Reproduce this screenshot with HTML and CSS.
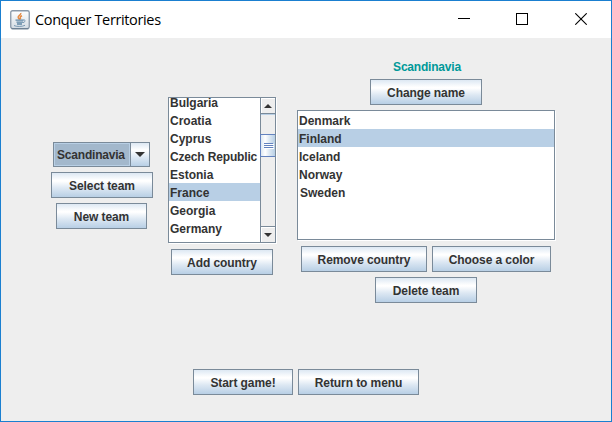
FILE: index.html
```html
<!DOCTYPE html>
<html lang="en">
<head>
<meta charset="utf-8">
<title>Conquer Territories</title>
<link rel="stylesheet" href="styles.css">
</head>
<body>
<div class="window">
  <header class="titlebar">
    <svg class="app-icon" width="20" height="20" viewBox="0 0 20 20">
      <defs><linearGradient id="tile" x1="0" y1="0" x2="0" y2="1"><stop offset="0" stop-color="#fff"/><stop offset="1" stop-color="#d3dbe3"/></linearGradient></defs>
      <rect x=".75" y=".75" width="18.5" height="17.8" rx="1.8" fill="url(#tile)" stroke="#8998a8" stroke-width="1.3"/>
      <path d="M1.5 18.8h17" stroke="#62778b"/>
      <path d="M10.8 3c.5 2-3.2 2.800-2.600 4.600.2.800 1 1.200 1.500 2M12 5.800c-1.800.8-2.500 1.800-1.200 3.400" fill="none" stroke="#e58a43" stroke-width="1.500"/>
      <path d="M5.500 10.200h8M6.500 12.200h6.500M7 14h5" stroke="#5f86a5" stroke-width="1.300"/>
      <path d="M13.200 10c2.600-.8 2.400 2.200-.2 2.600M4 15.500c2 1.300 8.500 1.300 11-.2" fill="none" stroke="#7898b2"/>
    </svg>
    <h1 class="title">Conquer Territories</h1>
    <div class="controls">
      <svg width="12" height="12" viewBox="0 0 12 12"><path d="M0 5.500h12" stroke="#000"/></svg>
      <svg width="12" height="12" viewBox="0 0 12 12"><rect x=".5" y=".5" width="11" height="11" fill="none" stroke="#000"/></svg>
      <svg class="close" width="12" height="12" viewBox="0 0 12 12"><path d="M.3.3l11.400 11.400M11.700.3L.3 11.700" stroke="#000" stroke-width="1.100"/></svg>
    </div>
  </header>
  <main class="content">
    <section class="teams">
      <div class="combo">
        <span class="combo-value">Scandinavia</span>
        <span class="combo-arrow"><svg width="10" height="5" viewBox="0 0 10 5"><path d="M0 0h10L5 5z" fill="#333"/></svg></span>
      </div>
      <button class="btn select">Select team</button>
      <button class="btn new">New team</button>
    </section>
    <section class="countries">
      <div class="list scroll-list">
        <ul class="items scrolled">
          <li>Bulgaria</li><li>Croatia</li><li>Cyprus</li><li class="long">Czech Republic</li><li>Estonia</li><li class="selected">France</li><li>Georgia</li><li>Germany</li>
        </ul>
        <div class="scrollbar">
          <span class="step up"><svg width="8" height="4" viewBox="0 0 8 4"><path d="M4 0l4 4H0z" fill="#333"/></svg></span>
          <span class="track"><span class="thumb"><i></i><i></i><i></i></span></span>
          <span class="step down"><svg width="8" height="4" viewBox="0 0 8 4"><path d="M0 0h8L4 4z" fill="#333"/></svg></span>
        </div>
      </div>
      <button class="btn add">Add country</button>
    </section>
    <section class="team">
      <h2 class="team-name">Scandinavia</h2>
      <button class="btn change">Change name</button>
      <div class="list team-list">
        <ul class="items">
          <li>Denmark</li><li class="selected">Finland</li><li>Iceland</li><li>Norway</li><li class="inset">Sweden</li>
        </ul>
      </div>
      <div class="row">
        <button class="btn remove">Remove country</button>
        <button class="btn color">Choose a color</button>
      </div>
      <button class="btn delete">Delete team</button>
    </section>
  </main>
  <footer class="actions">
    <button class="btn start">Start game!</button>
    <button class="btn return">Return to menu</button>
  </footer>
</div>
</body>
</html>
```
FILE: styles.css
```css
* { box-sizing: border-box; }
body { margin: 0; }
.window {
  width: 612px;
  height: 422px;
  border: 1px solid #1a7fd0;
  background: #eee;
  color: #333;
  font: bold 12px/18px "Liberation Sans", Arial, sans-serif;
  overflow: hidden;
}
.titlebar {
  display: flex;
  align-items: center;
  height: 37px;
  padding: 0 24px 0 9px;
  background: #fff;
}
.app-icon { flex: none; margin-right: 5px; }
.title {
  margin: 0;
  color: #000;
  font: 14.5px/20px "Open Sans", "Noto Sans", sans-serif;
  letter-spacing: -0.36px;
  white-space: nowrap;
}
.controls { display: flex; gap: 46px; margin-left: auto; padding-bottom: 1px; }
.controls svg { display: block; }
.controls .close { margin-left: 1px; }

.content { display: flex; align-items: flex-start; height: 331px; padding-left: 50px; }
.teams, .countries, .team { display: flex; flex-direction: column; align-items: center; flex: none; }

.btn {
  display: block;
  height: 26px;
  padding: 2px 0 0;
  border: 1px solid #7a8a99;
  border-radius: 0;
  background: linear-gradient(#dde8f3 0%, #fff 30%, #fff 34%, #dde8f3 62%, #b8cfe5 100%);
  color: #333;
  font: inherit;
  letter-spacing: -0.08px;
  line-height: 22px;
  text-align: center;
  white-space: nowrap;
}

.teams { width: 102px; gap: 5px; padding-top: 104px; }
.combo {
  display: flex;
  width: 97px;
  height: 25px;
  margin-right: 1px;
  border: 1px solid #7a8a99;
  background: linear-gradient(#dde8f3 0%, #fff 30%, #dde8f3 62%, #b8cfe5 100%);
}
.combo-value {
  width: 76px;
  height: 23px;
  padding-left: 2px;
  border: 1px solid #b8cfe5;
  background: #a3b8cc;
  letter-spacing: -0.2px;
  line-height: 22px;
  white-space: nowrap;
}
.combo-arrow {
  display: flex;
  flex: 1;
  align-items: center;
  justify-content: center;
  border-left: 1px solid #7a8a99;
}
.select { width: 102px; }
.new { width: 91px; margin-right: 1px; }

.countries { width: 108px; gap: 6px; margin-left: 15px; padding-top: 59px; }
.list {
  border: 1px solid #7a8a99;
  background: #fff;
  box-shadow: 1px 1px #fff;
  overflow: hidden;
}
.items { margin: 0; padding: 0; list-style: none; }
.items li { height: 18px; padding-left: 1px; line-height: 20px; white-space: nowrap; }
.items .long { letter-spacing: -0.16px; }
.items .inset { padding-left: 2px; }
.items .selected { background: #b8cfe5; }
.scroll-list { display: flex; width: 108px; height: 146px; }
.scroll-list .items { width: 91px; }
.scrolled { margin-top: -5px; }
.scrollbar {
  display: flex;
  flex-direction: column;
  width: 15px;
  border-left: 1px solid #7a8a99;
  background: #eee;
}
.step { display: flex; align-items: center; justify-content: center; height: 16px; flex: none; box-shadow: inset 1px 1px #fff; }
.up { border-bottom: 1px solid #7a8a99; }
.down { border-top: 1px solid #7a8a99; }
.track { flex: 1; padding-top: 19px; border-top: 1px solid #b8cfe5; }
.thumb {
  display: flex;
  flex-direction: column;
  align-items: center;
  justify-content: center;
  gap: 1px;
  height: 23px;
  margin-left: -1px;
  border: 1px solid #6382bf;
  border-right: 0;
  background: linear-gradient(90deg, #dde8f3, #fff 30%, #dde8f3 60%, #b8cfe5);
}
.thumb i { width: 9px; height: 1px; background: #6382bf; box-shadow: 1px 1px #fff; }
.add { width: 102px; }

.team { width: 258px; margin-left: 21px; padding-top: 20px; }
.team-name { height: 18px; margin: 0 0 3px; padding-left: 2px; color: #009999; font: inherit; letter-spacing: -0.2px; }
.change { width: 112px; margin-bottom: 5px; }
.team-list { width: 258px; height: 130px; margin-bottom: 6px; }
.row { display: flex; gap: 5px; margin-bottom: 5px; }
.remove { width: 126px; }
.color { width: 119px; }
.delete { width: 102px; }

.actions { display: flex; gap: 5px; padding-left: 192px; }
.start { width: 100px; }
.return { width: 121px; }
```
